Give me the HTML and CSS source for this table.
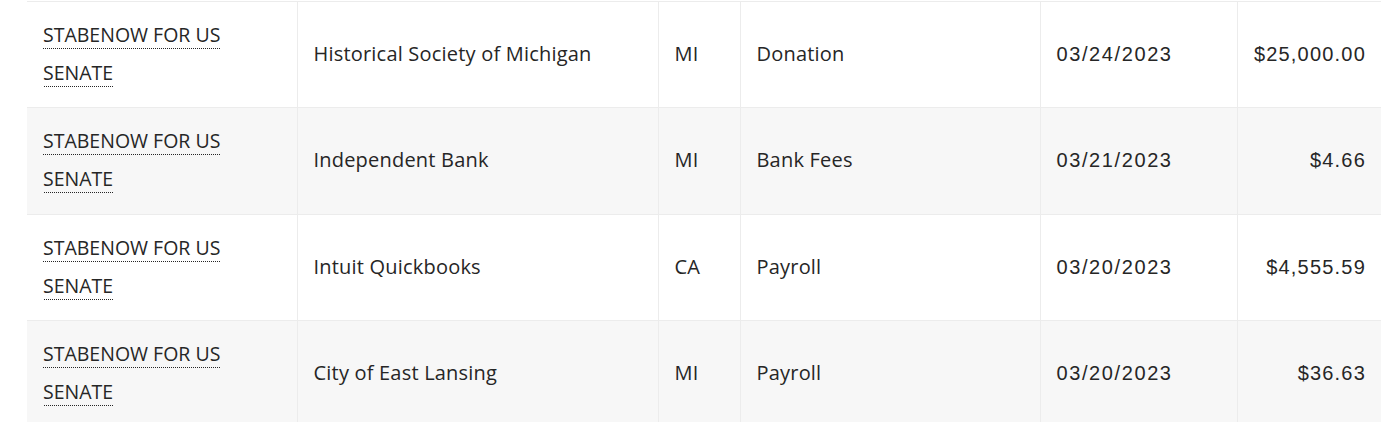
FILE: index.html
```html
<!DOCTYPE html>
<html lang="en">
<head>
<meta charset="utf-8">
<title>Expenditures</title>
<link rel="stylesheet" href="styles.css">
</head>
<body>
<div class="wrap">
  <table class="exp">
    <colgroup>
      <col class="c-com"><col class="c-payee"><col class="c-st"><col class="c-purp"><col class="c-date"><col class="c-amt">
    </colgroup>
    <tbody>
      <tr>
        <td class="com"><a class="link" href="#">STABENOW FOR US SENATE</a></td>
        <td>Historical Society of Michigan</td>
        <td>MI</td>
        <td>Donation</td>
        <td class="date">03/24/2023</td>
        <td class="amt">$25,000.00</td>
      </tr>
      <tr>
        <td class="com"><a class="link" href="#">STABENOW FOR US SENATE</a></td>
        <td>Independent Bank</td>
        <td>MI</td>
        <td>Bank Fees</td>
        <td class="date">03/21/2023</td>
        <td class="amt">$4.66</td>
      </tr>
      <tr>
        <td class="com"><a class="link" href="#">STABENOW FOR US SENATE</a></td>
        <td>Intuit Quickbooks</td>
        <td>CA</td>
        <td>Payroll</td>
        <td class="date">03/20/2023</td>
        <td class="amt">$4,555.59</td>
      </tr>
      <tr>
        <td class="com"><a class="link" href="#">STABENOW FOR US SENATE</a></td>
        <td>City of East Lansing</td>
        <td>MI</td>
        <td>Payroll</td>
        <td class="date">03/20/2023</td>
        <td class="amt">$36.63</td>
      </tr>
    </tbody>
  </table>
</div>
</body>
</html>
```
FILE: styles.css
```css
html, body {
  margin: 0;
  padding: 0;
  background: #ffffff;
}

.wrap {
  padding: 1px 0 0 27px;
}

.exp {
  width: 1354px;
  table-layout: fixed;
  border-collapse: collapse;
  font-family: "Open Sans", "Noto Sans", sans-serif;
  font-size: 20px;
  letter-spacing: 0.2px;
  color: #262626;
}

.c-com { width: 270px; }
.c-payee { width: 361px; }
.c-st { width: 82px; }
.c-purp { width: 300px; }
.c-date { width: 197px; }
.c-amt { width: 144px; }

.exp td {
  border-top: 1px solid #ececec;
  border-left: 1px solid #ececec;
  padding: 14px 16px 15.4px 16px;
  line-height: 38px;
  vertical-align: middle;
  text-align: left;
}

.exp td:first-child {
  border-left: none;
}

.exp tr:nth-child(even) td {
  background: #f7f7f7;
}

.exp td.com {
  font-size: 19.5px;
  letter-spacing: 0;
}

.link {
  color: #262626;
  text-decoration: none;
  padding-bottom: 1px;
  background-image: linear-gradient(to right, #262626 50%, transparent 50%);
  background-repeat: repeat-x;
  background-size: 2px 1px;
  background-position: 0 100%;
}

.exp td.date,
.exp td.amt {
  font-family: "Liberation Sans", Arial, sans-serif;
  font-size: 20px;
  letter-spacing: 1.2px;
}

.exp td.date {
  letter-spacing: 1.6px;
}

.exp td.amt {
  text-align: right;
  padding-right: 15px;
}
```
